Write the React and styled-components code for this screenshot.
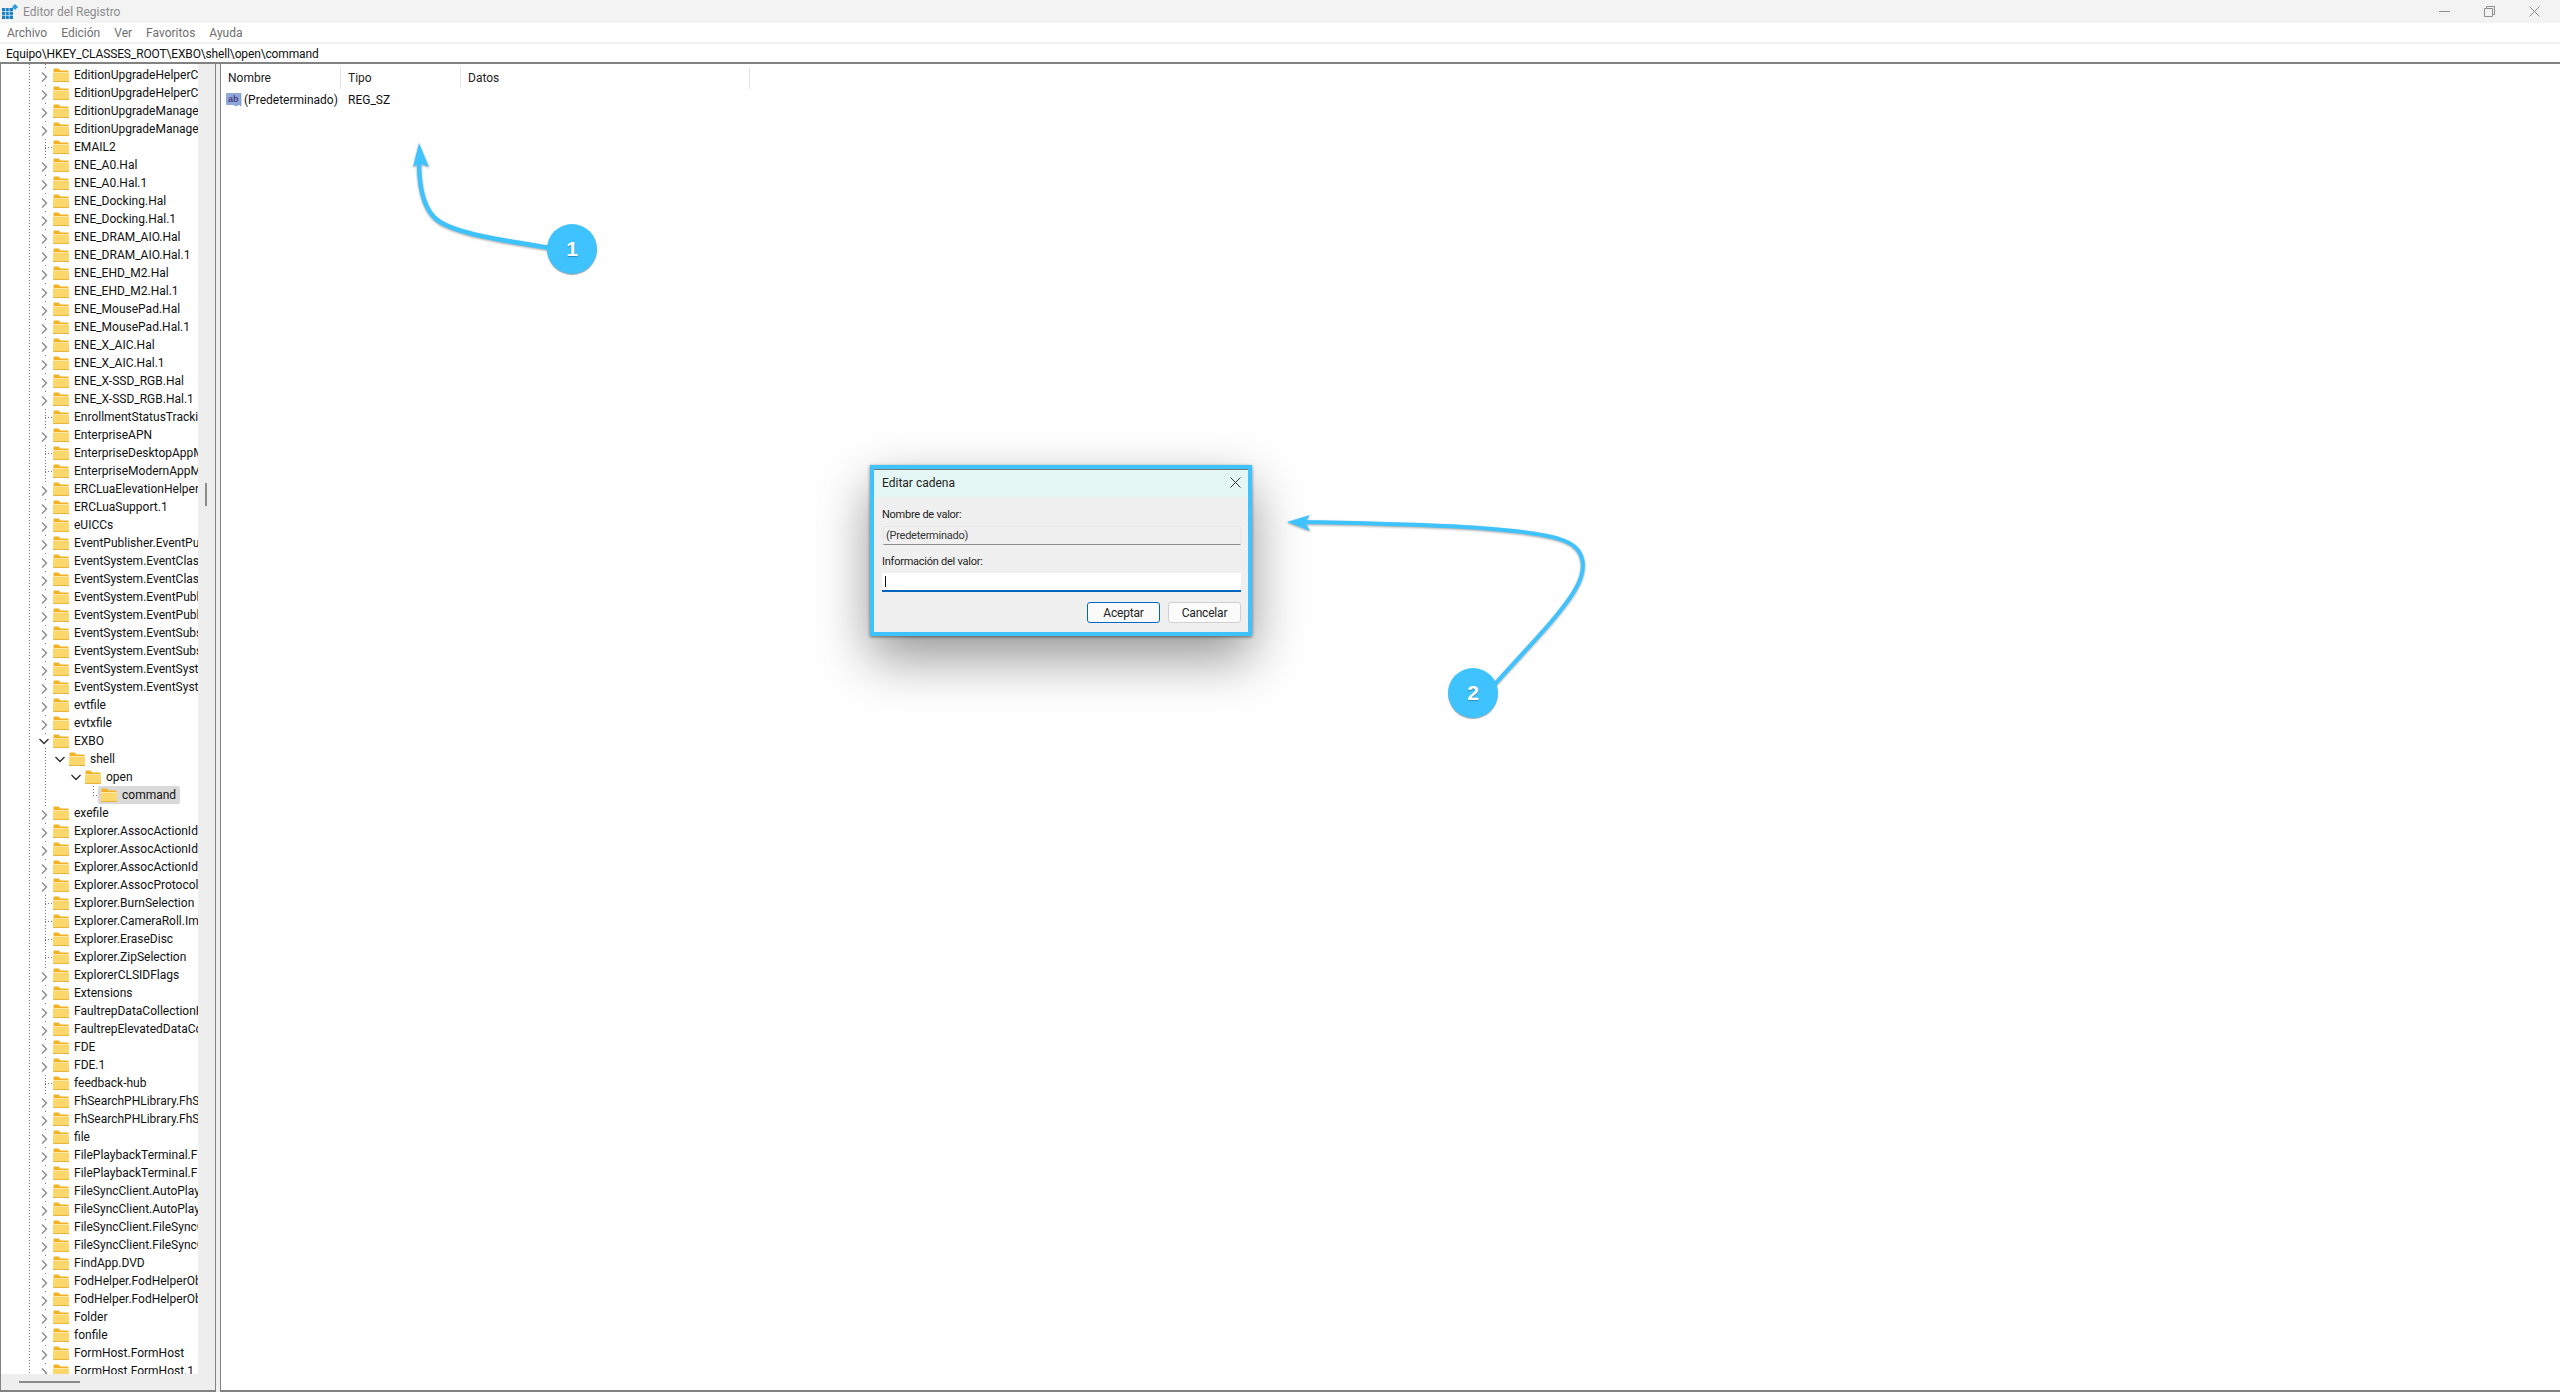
import styled, { createGlobalStyle } from "styled-components";

const Global = createGlobalStyle`
    html, body {
        margin: 0;
        padding: 0;
        background: white;
    }
    * {
        box-sizing: border-box;
    }
`
const Page = styled.div`
    position: relative;
    display: flex;
    flex-direction: column;
    width: 2560px;
    height: 1392px;
    overflow: hidden;
    background: white;
    font-family: Roboto, "Noto Sans", sans-serif;
    font-size: 12px;
    color: #111;
`
const TitleBar = styled.div`
    display: flex;
    align-items: center;
    height: 23px;
    padding-left: 2px;
    background: #f3f3f3;
    color: #8b8b8b;
`
const TitleText = styled.span`
    margin-left: 5px;
    flex: 1;
`
const WindowButton = styled.svg`
    width: 11px;
    height: 11px;
    margin-right: 34px;
    fill: none;
    stroke: #8f8f8f;
    stroke-width: 1;
    &:last-child {
        margin-right: 20px;
    }
`
const MenuBar = styled.div`
    display: flex;
    align-items: center;
    gap: 14px;
    height: 19px;
    padding-left: 7px;
    color: #6f6f6f;
`
const AddressBar = styled.div`
    display: flex;
    align-items: center;
    height: 22px;
    padding: 1px 0 0 6px;
    border-top: 2px solid #f0f0f0;
    border-bottom: 2px solid #828282;
    background: white;
    letter-spacing: -0.14px;
`
const Panes = styled.div`
    display: flex;
    flex: 1;
    min-height: 0;
    background: #f0f0f0;
`
const TreePane = styled.div`
    display: grid;
    grid-template-columns: 197px 17px;
    grid-template-rows: 1fr 16px;
    width: 216px;
    border-left: 1px solid #828282;
    border-right: 1px solid #828282;
    border-bottom: 2px solid #828282;
`
const TreeList = styled.div`
    overflow: hidden;
    padding-top: 2px;
    background-color: white;
    background-image:
        repeating-linear-gradient(to bottom, #777 0 1px, transparent 1px 3px),
        repeating-linear-gradient(to bottom, #777 0 1px, transparent 1px 3px);
    background-size: 1px 100%, 1px 100%;
    background-position: 28px 0, 44px 0;
    background-repeat: no-repeat;
`
const Row = styled.div`
    display: flex;
    align-items: center;
    height: 18px;
    padding-left: ${props => 35 + props.$level * 16}px;
    white-space: nowrap;
`
const Expander = styled.span`
    display: flex;
    align-items: center;
    justify-content: center;
    flex: none;
    width: 16px;
    height: 14px;
    margin-top: ${props => props.$open ? 0 : 3}px;
    background: white;
    svg {
        fill: none;
        stroke: ${props => props.$open ? "#2f2f2f" : "#8a8a8a"};
        stroke-width: 1.4;
    }
`
const Leaf = styled.span`
    flex: none;
    align-self: stretch;
    width: 16px;
    background-image:
        repeating-linear-gradient(to right, #777 0 1px, transparent 1px 3px),
        ${props => props.$nested ? "repeating-linear-gradient(to bottom, #777 0 1px, transparent 1px 3px)" : "none"};
    background-size: 8px 1px, 1px 9px;
    background-position: 9px 9px, 9px 0;
    background-repeat: no-repeat;
`
const FolderIcon = styled.svg`
    flex: none;
    width: 16px;
    height: 14px;
    margin: 0 0 0 1px;
`
const RowLabel = styled.span`
    margin-left: 5px;
`
const SelectedLabel = styled.div`
    display: flex;
    align-items: center;
    height: 18px;
    width: 82px;
    margin-left: -2px;
    padding-left: 2px;
    border-radius: 2px;
    background: #d9d9d9;
`
const VerticalTrack = styled.div`
    background: #eeeeee;
    padding: 419px 0 0 7px;
`
const VerticalThumb = styled.div`
    width: 2px;
    height: 23px;
    background: #8b8b8b;
`
const HorizontalTrack = styled.div`
    grid-column: 1 / 3;
    background: #eeeeee;
    padding: 7px 0 0 18px;
`
const HorizontalThumb = styled.div`
    width: 61px;
    height: 2px;
    background: #8b8b8b;
`
const PaneGap = styled.div`
    width: 4px;
`
const ValuePane = styled.div`
    flex: 1;
    border-left: 1px solid #828282;
    border-bottom: 2px solid #828282;
    background: white;
`
const ColumnHeader = styled.div`
    display: flex;
    height: 25px;
    padding-top: 3px;
`
const HeaderCell = styled.div`
    display: flex;
    align-items: center;
    width: ${props => props.$width}px;
    height: 22px;
    padding-left: 7px;
    border-right: 1px solid #e5e5e5;
    color: #222;
`
const ValueRow = styled.div`
    display: flex;
    align-items: center;
    height: 22px;
    padding-left: 5px;
`
const ValueIcon = styled.svg`
    flex: none;
    width: 16px;
    height: 16px;
`
const ValueName = styled.span`
    width: 104px;
    margin-left: 2px;
`
const Dialog = styled.div`
    position: absolute;
    left: 870px;
    top: 465px;
    display: flex;
    flex-direction: column;
    width: 382px;
    height: 171px;
    border: 4px solid #3ec3ff;
    background: #f0f0f0;
    box-shadow: 0 22px 50px rgba(0, 0, 0, 0.42), 0 1px 3px rgba(0, 0, 0, 0.5);
`
const DialogTitle = styled.div`
    display: flex;
    align-items: center;
    justify-content: space-between;
    height: 28px;
    padding: 0 7px 2px 8px;
    border-top: 1px solid #777;
    background: #e4f7f4;
    color: #222;
`
const CloseIcon = styled.svg`
    width: 11px;
    height: 11px;
    fill: none;
    stroke: #333;
    stroke-width: 1;
`
const DialogBody = styled.div`
    display: flex;
    flex-direction: column;
    padding: 9px 7px 0 8px;
    font-size: 11px;
    letter-spacing: -0.25px;
`
const FieldLabel = styled.div`
    height: 17px;
    line-height: 17px;
    color: #222;
`
const ReadonlyField = styled.div`
    display: flex;
    align-items: center;
    height: 19px;
    margin: 3px 0 8px 1px;
    padding-left: 2px;
    border: 1px solid #e6e6e6;
    border-bottom-color: #8c8c8c;
    color: #333;
`
const ValueField = styled.div`
    display: flex;
    align-items: center;
    height: 19px;
    margin-top: 3px;
    padding-left: 3px;
    border-bottom: 2px solid #0067c0;
    background: white;
`
const Caret = styled.span`
    width: 1px;
    height: 11px;
    background: #111;
`
const ButtonRow = styled.div`
    display: flex;
    justify-content: flex-end;
    gap: 8px;
    margin-top: 10px;
`
const Button = styled.div`
    display: flex;
    align-items: center;
    justify-content: center;
    width: 73px;
    height: 21px;
    border: 1px solid ${props => props.$primary ? "#0067c0" : "#d0d0d0"};
    border-radius: 3px;
    background: #fbfbfb;
    color: #222;
    font-size: 12px;
    letter-spacing: -0.2px;
`
const Arrows = styled.svg`
    position: absolute;
    left: 0;
    top: 0;
    width: 2560px;
    height: 1392px;
    pointer-events: none;
    filter: drop-shadow(0 1px 1px rgba(0, 0, 0, 0.35));
`
const Badge = styled.div`
    position: absolute;
    left: ${props => props.$x - 25}px;
    top: ${props => props.$y - 25}px;
    display: flex;
    align-items: center;
    justify-content: center;
    width: 50px;
    height: 50px;
    border-radius: 50%;
    background: #3ec3ff;
    box-shadow: 0 1px 1px rgba(0, 0, 0, 0.35);
    color: white;
    font-family: "Liberation Sans", sans-serif;
    font-weight: 700;
    font-size: 21px;
    text-shadow: 0 1px 1px rgba(0, 0, 0, 0.3);
`

// c = has children (collapsed), l = leaf
const treeRows = [
    ["EditionUpgradeHelperClass", "c"], ["EditionUpgradeHelperClass.1", "c"],
    ["EditionUpgradeManagerObj", "c"], ["EditionUpgradeManagerObj.1", "c"],
    ["EMAIL2", "l"], ["ENE_A0.Hal", "c"], ["ENE_A0.Hal.1", "c"],
    ["ENE_Docking.Hal", "c"], ["ENE_Docking.Hal.1", "c"],
    ["ENE_DRAM_AIO.Hal", "c"], ["ENE_DRAM_AIO.Hal.1", "c"],
    ["ENE_EHD_M2.Hal", "c"], ["ENE_EHD_M2.Hal.1", "c"],
    ["ENE_MousePad.Hal", "c"], ["ENE_MousePad.Hal.1", "c"],
    ["ENE_X_AIC.Hal", "c"], ["ENE_X_AIC.Hal.1", "c"],
    ["ENE_X-SSD_RGB.Hal", "c"], ["ENE_X-SSD_RGB.Hal.1", "c"],
    ["EnrollmentStatusTracking", "l"], ["EnterpriseAPN", "c"],
    ["EnterpriseDesktopAppMgmt", "l"], ["EnterpriseModernAppMgmt", "l"],
    ["ERCLuaElevationHelper", "c"], ["ERCLuaSupport.1", "c"], ["eUICCs", "c"],
    ["EventPublisher.EventPublisher", "c"],
    ["EventSystem.EventClass", "c"], ["EventSystem.EventClass.1", "c"],
    ["EventSystem.EventPublisher", "c"], ["EventSystem.EventPublisher.1", "c"],
    ["EventSystem.EventSubscription", "c"], ["EventSystem.EventSubscription.1", "c"],
    ["EventSystem.EventSystem", "c"], ["EventSystem.EventSystem.1", "c"],
    ["evtfile", "c"], ["evtxfile", "c"],
    ["EXBO", "o", 0], ["shell", "o", 1], ["open", "o", 2], ["command", "s", 3],
    ["exefile", "c"],
    ["Explorer.AssocActionId.BurnAudio", "c"], ["Explorer.AssocActionId.BurnData", "c"],
    ["Explorer.AssocActionId.EraseDisc", "c"], ["Explorer.AssocProtocol.Cdda", "c"],
    ["Explorer.BurnSelection", "l"], ["Explorer.CameraRoll.Import", "l"],
    ["Explorer.EraseDisc", "l"], ["Explorer.ZipSelection", "l"],
    ["ExplorerCLSIDFlags", "c"], ["Extensions", "c"],
    ["FaultrepDataCollectionHandler", "c"], ["FaultrepElevatedDataCollection", "c"],
    ["FDE", "c"], ["FDE.1", "c"], ["feedback-hub", "l"],
    ["FhSearchPHLibrary.FhSearch", "c"], ["FhSearchPHLibrary.FhSearch.1", "c"],
    ["file", "c"],
    ["FilePlaybackTerminal.FilePlayback", "c"], ["FilePlaybackTerminal.FilePlayback.1", "c"],
    ["FileSyncClient.AutoPlayHandler", "c"], ["FileSyncClient.AutoPlayHandler.1", "c"],
    ["FileSyncClient.FileSyncClient", "c"], ["FileSyncClient.FileSyncClient.1", "c"],
    ["FindApp.DVD", "c"],
    ["FodHelper.FodHelperObject", "c"], ["FodHelper.FodHelperObject.1", "c"],
    ["Folder", "c"], ["fonfile", "c"], ["FormHost.FormHost", "c"], ["FormHost.FormHost.1", "c"],
]

function Folder() {
    return (
        <FolderIcon viewBox="0 0 16 14">
            <path d="M0.5 4.5V1.2Q0.5 .5 1.2 .5H5.5L7.5 2.5H15.5V4.5Z" fill="#f3b223" />
            <path d="M0 4H16V13Q16 14 15 14H1Q0 14 0 13Z" fill="#fcd76b" />
            <path d="M0 4H16V5H0Z" fill="#ffe9a6" />
            <path d="M0 13H16V14H0Z" fill="#e9b63a" />
        </FolderIcon>
    )
}

function TreeRow({ name, kind, level = 0 }) {
    const isSelected = kind === "s"
    return (
        <Row $level={level}>
            {kind === "c" && (
                <Expander>
                    <svg width="7" height="10" viewBox="0 0 7 10"><path d="M1 .5L5.5 5L1 9.5" /></svg>
                </Expander>
            )}
            {kind === "o" && (
                <Expander $open>
                    <svg width="10" height="7" viewBox="0 0 10 7"><path d="M.5 1L5 5.5L9.5 1" /></svg>
                </Expander>
            )}
            {(kind === "l" || isSelected) && <Leaf $nested={isSelected} />}
            {isSelected ? (
                <SelectedLabel>
                    <Folder />
                    <RowLabel>{name}</RowLabel>
                </SelectedLabel>
            ) : (
                <>
                    <Folder />
                    <RowLabel>{name}</RowLabel>
                </>
            )}
        </Row>
    )
}

function App() {
    return (
        <Page>
            <Global />
            <TitleBar>
                <svg width="16" height="16" viewBox="0 0 16 16">
                    <path d="M0 4H11V15H0Z" fill="#1a7fc4" />
                    <path d="M3.5 4V15M7.2 4V15M0 7.6H11M0 11.3H11" stroke="#d5ecf8" strokeWidth="0.8" />
                    <path d="M13 0L16 3L13 6L10 3Z" fill="#2a9fdc" />
                </svg>
                <TitleText>Editor del Registro</TitleText>
                <WindowButton viewBox="0 0 11 11"><path d="M0 5.5H11" /></WindowButton>
                <WindowButton viewBox="0 0 11 11">
                    <path d="M.5 2.5H8.5V10.5H.5Z M2.5 2.5V.5H10.5V8.5H8.5" />
                </WindowButton>
                <WindowButton viewBox="0 0 11 11"><path d="M.5 .5L10.5 10.5M10.5 .5L.5 10.5" /></WindowButton>
            </TitleBar>
            <MenuBar>
                <span>Archivo</span>
                <span>Edición</span>
                <span>Ver</span>
                <span>Favoritos</span>
                <span>Ayuda</span>
            </MenuBar>
            <AddressBar>Equipo\HKEY_CLASSES_ROOT\EXBO\shell\open\command</AddressBar>
            <Panes>
                <TreePane>
                    <TreeList>
                        {treeRows.map(([name, kind, level]) => (
                            <TreeRow key={name} name={name} kind={kind} level={level} />
                        ))}
                    </TreeList>
                    <VerticalTrack><VerticalThumb /></VerticalTrack>
                    <HorizontalTrack><HorizontalThumb /></HorizontalTrack>
                </TreePane>
                <PaneGap />
                <ValuePane>
                    <ColumnHeader>
                        <HeaderCell $width={120}>Nombre</HeaderCell>
                        <HeaderCell $width={120}>Tipo</HeaderCell>
                        <HeaderCell $width={289}>Datos</HeaderCell>
                    </ColumnHeader>
                    <ValueRow>
                        <ValueIcon viewBox="0 0 16 16">
                            <path d="M.5 1.5H15V14L13 12.5L10 14L7 12.5H.5Z" fill="#8ea9da" stroke="#6f88bd" strokeWidth="0.6" />
                            <text x="2" y="10" fontSize="9" fontWeight="700" fontFamily="Liberation Sans" fill="#4d3f85">ab</text>
                        </ValueIcon>
                        <ValueName>(Predeterminado)</ValueName>
                        <span>REG_SZ</span>
                    </ValueRow>
                </ValuePane>
            </Panes>
            <Dialog>
                <DialogTitle>
                    Editar cadena
                    <CloseIcon viewBox="0 0 11 11"><path d="M.5 .5L10.5 10.5M10.5 .5L.5 10.5" /></CloseIcon>
                </DialogTitle>
                <DialogBody>
                    <FieldLabel>Nombre de valor:</FieldLabel>
                    <ReadonlyField>(Predeterminado)</ReadonlyField>
                    <FieldLabel>Información del valor:</FieldLabel>
                    <ValueField><Caret /></ValueField>
                    <ButtonRow>
                        <Button $primary>Aceptar</Button>
                        <Button>Cancelar</Button>
                    </ButtonRow>
                </DialogBody>
            </Dialog>
            <Arrows viewBox="0 0 2560 1392">
                <path d="M550 248C500 240 460 234 440 222C424 212 419 190 419 162" fill="none" stroke="#3ec3ff" strokeWidth="4.5" />
                <path d="M419 143L429 167L419 163L413 167Z" fill="#3ec3ff" />
                <path d="M1305 522C1400 524 1530 526 1565 541C1585 549 1588 568 1575 590C1560 615 1530 645 1495 684" fill="none" stroke="#3ec3ff" strokeWidth="4" />
                <path d="M1287 522L1310 515L1305 522L1310 531Z" fill="#3ec3ff" />
            </Arrows>
            <Badge $x={572} $y={249}>1</Badge>
            <Badge $x={1473} $y={693}>2</Badge>
        </Page>
    );
}

export default App;
